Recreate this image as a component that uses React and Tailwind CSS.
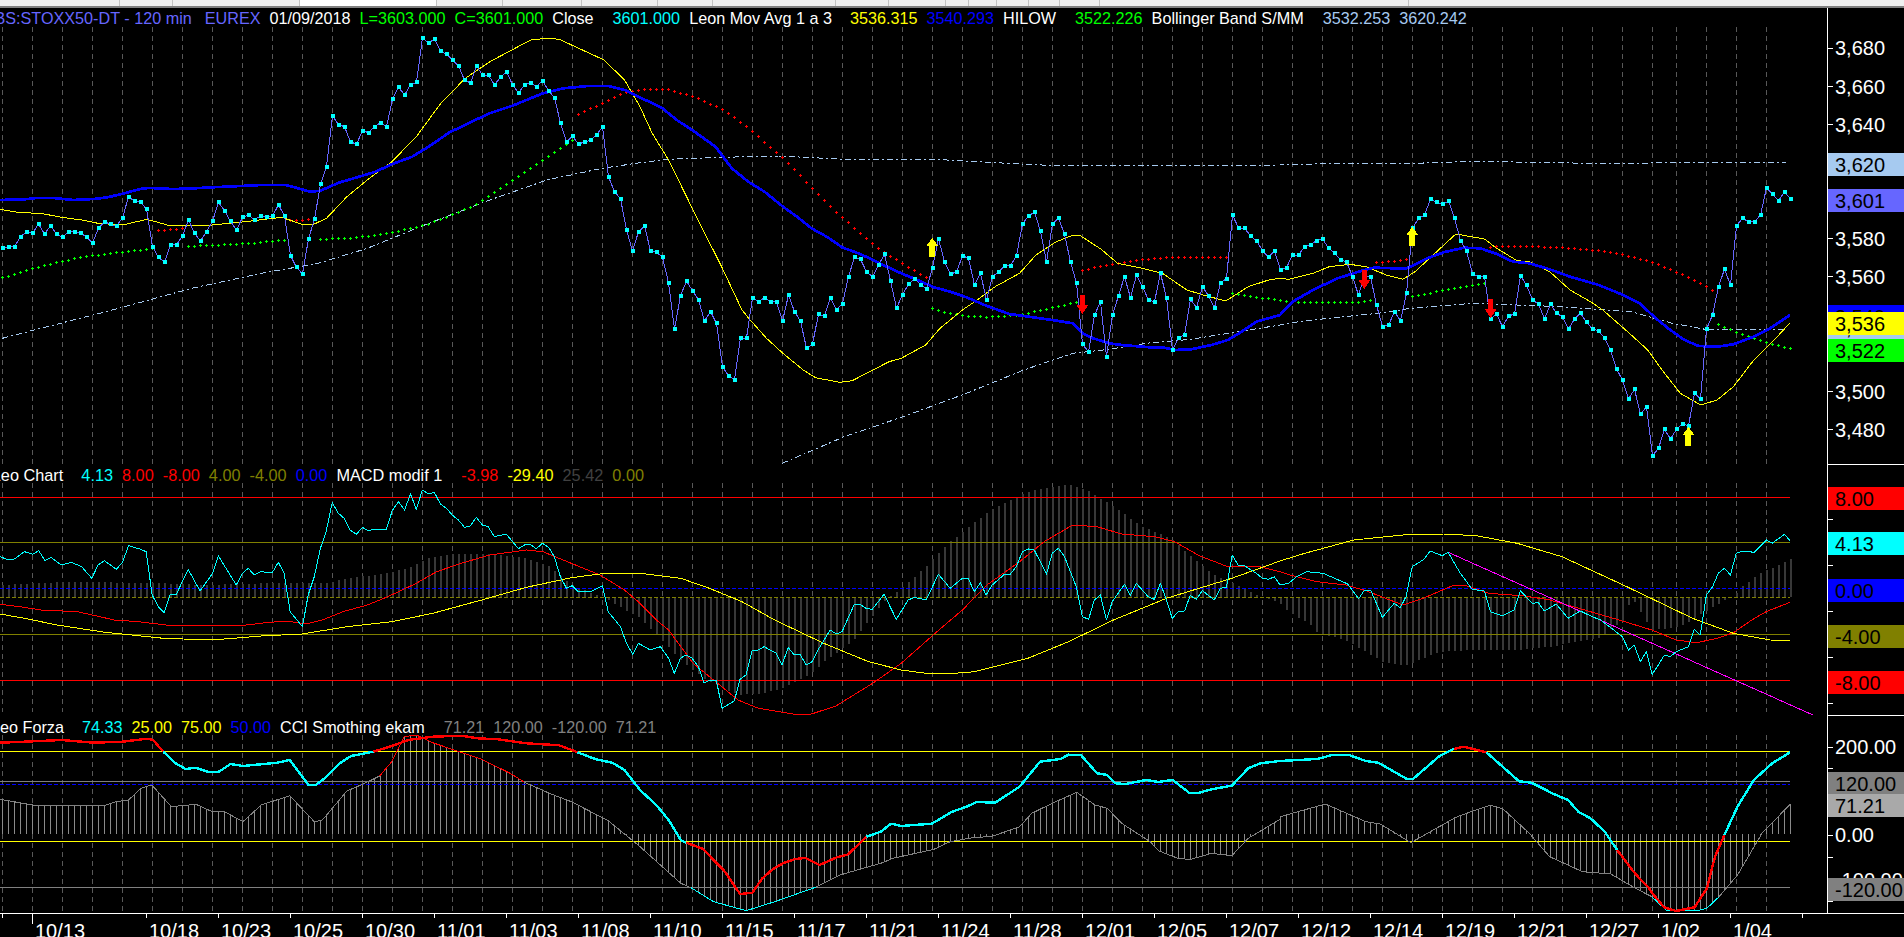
const CYAN = "#00ffff", BLUE = "#0000ff", YEL = "#ffff00", RED = "#ff0000", GRN = "#00ff00", OLV = "#808000", LB = "#a6caf0", GRY = "#808080", PRC = "#6666ff", MAG = "#ff00ff";
const A = 0, B = 640, C = 1264;
function merge(yo, ...sections) {
  const out = [];
  let last = -1e9;
  for (const [xo, arr] of sections) {
    const p = [];
    for (let i = 0; i < arr.length; i += 2) p.push([xo + arr[i] / 2.45, yo + arr[i + 1] / 3]);
    p.sort((a, b) => a[0] - b[0]);
    for (const q of p) if (q[0] > last) { out.push(q); last = q[0]; }
  }
  return out;
}
const yAt = (pts, x) => {
  if (x <= pts[0][0]) return pts[0][1];
  for (let i = 1; i < pts.length; i++) if (x <= pts[i][0]) {
    const [a, b] = pts[i - 1], [c, d] = pts[i];
    return b + (d - b) * (x - a) / (c - a);
  }
  return pts[pts.length - 1][1];
};
const str = (pts) => pts.map((p) => p[0].toFixed(1) + "," + p[1].toFixed(1)).join(" ");
const barX = (i) => 2.5 + 6 * i;

const price = [745,740,740,710,695,700,672,702,677,702,712,695,695,700,710,729,684,665,673,678,654,590,604,607,627,740,772,787,734,734,707,660,700,723,695,664,607,632,664,690,652,645,659,648,652,648,614,648,767,802,822,716,658,552,500,347,374,380,426,432,392,398,380,368,380,298,261,285,254,247,113,129,117,152,163,180,197,240,249,197,226,226,254,232,215,254,279,254,248,260,242,272,293,369,426,409,432,426,421,405,380,530,575,596,689,753,695,
678,752,757,772,848,987,887,843,872,899,963,935,970,1100,1127,1140,1014,1014,893,905,893,905,905,963,885,935,963,1045,1032,943,948,893,929,911,830,772,778,815,830,795,763,842,924,884,852,836,854,867,803,716,786,822,816,767,775,855,820,900,830,816,798,797,767,672,647,637,694,786,672,654,703,786,848,1032,1056,945,905,1070,945,887,830,893,825,860,900,905,820,893,1050,1014,1004,898,923,860,887,923,848,836,645,684,684,708,722,752,772,752,
810,803,765,765,740,735,722,716,745,758,780,785,830,885,830,830,915,980,975,935,962,880,685,655,645,597,607,613,603,655,722,752,822,830,830,957,942,980,948,942,827,855,900,912,957,912,940,950,987,957,940,967,987,992,1014,1049,1107,1140,1197,1168,1242,1220,1367,1345,1288,1317,1288,1272,1277,1180,1197,987,945,860,808,855,677,655,665,665,645,563,582,603,575,597];
const pricePts = price.map((v, i) => [barX(i), v / 3]);

const blueMA = merge(0,
  [A,[0,600,60,598,90,594,130,594,180,600,240,596,270,590,310,578,350,565,370,564,420,567,460,566,520,562,590,558,640,555,700,555,730,565,760,575,785,572,830,548,880,530,920,515,960,493,1010,470,1050,440,1100,398,1150,368,1200,340,1260,315,1330,280,1380,265,1440,258,1490,258,1530,270,1568,292]],
  [B,[55,325,90,360,130,392,185,440,225,505,265,545,305,575,350,620,385,650,420,685,460,712,495,742,540,762,590,792,640,820,680,840,720,862,760,875,800,892,850,918,905,942,940,948,1010,960,1060,970,1085,1000,1110,1015,1150,1030,1180,1035,1250,1042,1280,1042,1310,1050,1350,1048,1400,1035,1440,1020,1470,998,1510,965,1568,945]],
  [C,[70,905,120,870,180,835,240,812,270,803,320,805,350,805,400,775,440,757,490,743,530,745,570,762,610,785,650,790,700,808,750,830,820,855,880,885,920,910,960,955,990,985,1030,1020,1065,1038,1110,1040,1150,1033,1200,1010,1240,985,1289,945]]);

const yellowMA = merge(0,
  [A,[0,628,50,638,100,640,150,652,200,660,240,670,300,675,360,658,410,675,520,675,600,665,690,652,745,675,770,672,800,655,850,590,900,540,960,485,1020,410,1080,310,1140,235,1200,185,1300,120,1340,115,1370,118,1480,180,1530,240,1568,320]],
  [B,[30,400,70,480,130,630,200,800,250,930,270,960,310,1015,350,1060,400,1110,430,1133,490,1147,520,1142,610,1085,640,1075,700,1035,735,985,790,930,820,905,870,860,930,820,970,765,1020,725,1060,706,1080,708,1130,748,1170,790,1230,805,1280,820,1340,870,1380,885,1435,903,1490,860,1540,840,1568,835]],
  [C,[60,838,120,820,160,800,210,793,250,800,300,825,340,838,370,815,410,770,470,702,540,717,570,745,620,782,650,785,700,815,750,870,800,905,830,930,900,1005,940,1050,975,1110,1020,1180,1070,1215,1110,1200,1150,1160,1200,1080,1250,1020,1289,968]]);

const bollUp = merge(0,
  [A,[6,1015,100,985,260,935,470,865,640,820,780,790,900,745,1040,675,1200,600,1340,540,1476,505,1568,488]],
  [B,[70,478,200,472,340,468,500,478,720,478,900,490,1000,496,1300,498,1568,495]],
  [C,[180,490,370,490,510,484,800,490,1280,487]]);
const bollLow = merge(0,
  [B,[349,1390,500,1310,650,1248,800,1180,940,1110,1060,1060,1150,1048,1240,1030,1350,1018,1568,975]],
  [C,[100,962,280,940,360,925,510,910,730,920,900,935,1000,970,1090,990,1280,988]]);

const dotGroups = [
  [GRN, merge(0,[A,[6,832,100,798,200,770,300,755,373,745]])],
  [GRN, merge(0,[A,[461,738,600,730,696,720]])],
  [GRN, merge(0,[A,[785,716,860,714,960,697,1040,675,1100,648,1167,612,1240,553,1300,505,1360,455,1402,420]])],
  [GRN, merge(0,[B,[716,925,760,940,800,947,850,950,890,948,940,942,1000,925,1070,905]])],
  [GRN, merge(0,[B,[1451,880,1510,890,1568,900]],[C,[70,905,100,907,240,905,265,900]])],
  [GRN, merge(0,[C,[363,888,420,875,480,862,540,850]])],
  [GRN, merge(0,[C,[1113,973,1157,995,1230,1027,1289,1045]])],
  [RED, merge(0,[A,[388,690,447,685]])],
  [RED, merge(0,[A,[711,660,770,658]])],
  [RED, merge(0,[A,[1417,343,1476,308,1535,275,1568,268]],[B,[70,268,128,287,202,327,260,377,305,425,349,470,408,545,481,635,555,715,600,758,700,830]])],
  [RED, merge(0,[B,[1084,810,1143,795,1216,780,1300,770,1440,770]])],
  [RED, merge(0,[C,[275,787,350,778]])],
  [RED, merge(0,[C,[555,740,640,737,750,743,850,755,950,785,1040,830,1100,870]])],
];
const dotPath = (pts) => {
  let d = "";
  for (let i = 0; i < 299; i++) {
    const x = barX(i);
    if (x < pts[0][0] - 1 || x > pts[pts.length - 1][0] + 1) continue;
    const y = Math.round(yAt(pts, x)) + 0.5;
    d += `M${x - 1.5} ${y}h3M${x} ${y - 1.5}v3`;
  }
  return d;
};
const arrows = [
  [YEL, 640 + 716 / 2.45, 238, 1],
  [YEL, 1264 + 363 / 2.45, 227, 1],
  [YEL, 1264 + 1040 / 2.45, 427, 1],
  [RED, 640 + 1084 / 2.45, 295, -1],
  [RED, 1264 + 246 / 2.45, 270, -1],
  [RED, 1264 + 555 / 2.45, 299, -1],
];

const macdEnv = merge(310,
  [A,[0,825,170,815,250,815,300,820,400,820,500,825,700,818,800,820,850,805,950,790,1010,770,1050,745,1100,733,1200,733,1290,745,1340,765,1400,825,1476,862,1490,870,1568,925]],
  [B,[100,1050,160,1110,240,1155,300,1150,350,1135,420,1090,450,1055,520,995,555,940,600,870,625,850,655,820,700,770,750,705,800,655,860,600,950,545,1050,522,1100,545,1160,590,1230,650,1300,685,1350,740,1400,790,1470,830,1510,855,1540,868,1568,880]],
  [C,[60,905,120,950,130,970,200,990,290,1055,345,1068,430,1025,520,1020,620,1020,700,1010,820,985,880,930,900,862,950,960,1020,950,1060,920,1100,890,1130,870,1150,862,1170,830,1215,790,1260,765,1289,747]]);
const macdCyan = merge(310,
  [A,[0,740,15,747,35,747,60,725,80,733,95,722,110,752,125,742,150,765,175,757,200,770,225,805,240,765,256,752,285,778,300,757,315,707,345,718,358,725,373,855,388,890,402,908,417,853,432,853,461,778,490,843,520,792,535,738,579,825,594,790,608,775,623,795,638,785,667,788,682,757,696,790,711,905,741,950,755,855,770,800,785,715,799,665,814,578,829,610,843,625,858,660,873,673,888,652,902,662,917,657,947,657,961,602,976,575,991,600,1006,552,1020,598,1035,540,1050,552,1064,547,1079,582,1094,595,1108,615,1123,630,1138,652,1152,648,1167,622,1182,645,1196,650,1211,680,1240,672,1270,716,1285,705,1299,703,1314,716,1329,700,1344,712,1358,740,1373,800,1388,835,1402,827,1417,845,1447,845,1476,827,1490,905,1520,950,1535,1000,1550,1033,1564,1000]],
  [B,[25,1020,50,1010,70,1045,84,1090,99,1045,113,1035,128,1045,143,1070,157,1118,172,1110,187,1110,201,1195,231,1173,245,1108,260,1095,275,1022,290,1020,304,1010,334,1030,348,1065,363,1013,378,1035,392,1033,407,1065,422,1055,436,1020,466,960,481,972,495,965,525,883,539,883,554,895,569,898,598,853,628,928,657,870,672,862,701,870,731,793,760,835,790,805,804,805,819,845,834,818,848,855,863,825,893,793,907,793,922,770,937,725,952,717,966,720,996,793,1010,730,1025,715,1040,740,1069,830,1084,920,1099,928,1113,870,1128,855,1143,930,1157,875,1187,823,1201,857,1216,820,1245,860,1260,868,1275,820,1290,870,1304,925,1319,905,1334,903,1348,857,1363,868,1378,842,1407,870,1422,835,1437,832,1451,735,1466,767,1481,767,1510,790,1525,805,1540,808,1554,800,1568,825]],
  [C,[60,820,80,800,105,785,145,790,205,822,232,866,245,842,262,842,290,922,319,880,334,893,348,860,363,770,392,748,407,723,437,737,451,727,481,790,510,838,540,843,555,905,584,918,613,900,628,842,657,880,672,878,687,903,716,882,745,925,775,903,804,920,825,930,878,980,893,1020,907,1005,922,1055,937,1025,951,1093,966,1065,981,1035,995,1040,1010,1025,1040,1010,1054,958,1069,975,1084,855,1099,830,1113,790,1128,775,1143,795,1157,730,1172,723,1201,727,1231,690,1245,700,1275,673,1289,692]]);
const macdRed = merge(310,
  [A,[0,883,50,890,100,900,190,905,280,930,340,935,420,947,590,947,650,938,700,933,750,942,790,930,840,905,900,885,950,860,1020,820,1070,785,1130,760,1200,735,1290,720,1330,725,1360,740,1470,795,1530,840,1568,880]],
  [B,[40,930,70,960,130,1060,190,1120,240,1170,290,1195,380,1213,420,1212,480,1188,570,1120,640,1060,720,973,790,900,850,825,930,755,990,695,1060,645,1120,650,1180,672,1260,680,1310,695,1370,737,1440,770,1510,768,1568,785]],
  [C,[70,797,130,815,200,825,250,842,340,885,390,865,460,828,490,825,550,850,640,858,700,870,800,905,870,930,950,960,1010,990,1060,998,1110,985,1150,968,1195,930,1230,905,1289,877]]);
const macdYel = merge(310,
  [A,[0,912,60,925,140,945,220,960,265,968,300,972,400,985,520,990,640,978,740,972,850,950,960,935,1060,910,1180,870,1290,832,1400,803,1470,792,1568,790]],
  [B,[100,805,170,835,250,875,330,930,450,1000,560,1055,640,1080,700,1090,770,1090,820,1085,950,1045,1050,995,1160,930,1290,865,1450,805,1568,753]],
  [C,[100,730,220,690,340,675,440,672,520,677,620,700,730,740,880,825,1050,925,1150,970,1240,990,1289,992]]);
const magenta = merge(310, [C,[451,727,1345,1215]]);

const forza = [
  [RED, merge(620,[A,[0,368,60,365,150,360,230,368,300,365,360,356,375,360,400,395]])],
  [CYAN, merge(620,[A,[400,395,430,430,455,447,480,443,510,456,535,456,565,432,595,438,680,428,710,420,755,494,775,494,800,470,830,432,860,408,915,395]])],
  [RED, merge(620,[A,[915,395,960,378,1000,360,1060,350,1130,347,1170,355,1220,358,1290,370,1370,376,1415,397]])],
  [CYAN, merge(620,[A,[1415,397,1460,418,1500,428,1530,450,1568,510]],[B,[40,555,70,600,100,660,113,668]])],
  [RED, merge(620,[B,[113,668,155,687,180,720,205,750,245,822,275,818,300,775,325,748,350,730,380,717,405,714,440,735,480,713,510,703,555,650]])],
  [CYAN, merge(620,[B,[555,650,590,635,615,611,640,618,715,611,765,575,800,560,825,546,870,548,930,500,980,425,1030,417,1050,404,1080,405,1120,460,1145,465,1165,490,1190,492,1240,480,1270,486,1305,480,1345,518,1370,518,1400,508,1450,497,1490,445,1520,430,1568,423]],[C,[130,417,170,404,210,406,250,423,280,428,350,477,365,477,430,408,465,387]])],
  [RED, merge(620,[C,[465,387,490,380,545,397]])],
  [CYAN, merge(620,[C,[545,397,625,484,655,488,710,522,745,540,770,575,800,595,835,635,865,690]])],
  [RED, merge(620,[C,[865,690,910,762,940,800,955,825,980,862,1010,873,1055,862,1085,805,1105,710,1128,645]])],
  [CYAN, merge(620,[C,[1128,645,1160,560,1200,480,1245,430,1289,397]])],
];
const cci = [
  [GRY, merge(620,[A,[0,538,80,555,260,555,285,545,315,540,345,505,372,495,420,560,480,553,520,575,550,575,595,605,640,555,710,527,770,605,790,600,850,513,890,492,930,468]])],
  [RED, merge(620,[A,[930,468,960,425,990,350,1020,345,1060,368,1180,418,1250,460,1285,487]])],
  [GRY, merge(620,[A,[1285,487,1350,522,1400,545,1490,602,1568,680]],[B,[50,735,100,790,125,803]])],
  [CYAN, merge(620,[B,[125,803,180,845,260,872,330,845,430,802]])],
  [GRY, merge(620,[B,[430,802,490,765,590,730,620,715,720,688,760,665,820,652,860,650,930,620,960,580,1010,550,1070,517,1115,555,1145,565,1180,610,1250,665,1270,692,1320,716,1350,718,1400,700,1450,707,1490,655,1568,598]],[C,[40,590,150,552,250,605,285,612,360,668,470,592,510,574,555,556,585,566,650,640,700,710,780,755,850,762,910,805,950,830]])],
  [CYAN, merge(620,[C,[950,830,985,870,1060,873,1085,865,1115,830]])],
  [GRY, merge(620,[C,[1115,830,1160,765,1220,640,1289,553]])],
];
const cciAll = cci.flatMap((c) => c[1]);

const gridX = [];
for (let k = 0; k <= 55; k++) gridX.push(2.5 + 30 * k);
for (let j = 0; j < 4; j++) gridX.push(1676.5 + 30 * j);
const bars = Array.from({ length: 299 }, (_, i) => barX(i));

function Plot({ top, height, gridTop, gridBottom, children }) {
  return (
    <svg className="block shrink-0" width="1827" height={height} viewBox={`0 ${top} 1827 ${height}`} shapeRendering="crispEdges" fill="none">
      {gridX.map((x) => (
        <line key={x} x1={x} x2={x} y1={gridTop} y2={gridBottom} stroke="#585858" strokeDasharray="5 4" />
      ))}
      {children}
    </svg>
  );
}
const HLine = ({ y, c, dash, w = 1 }) => <line x1="0" x2="1790" y1={y} y2={y} stroke={c} strokeDasharray={dash} strokeWidth={w} />;
const Line = ({ pts, c, w = 1, dash }) => <polyline points={str(pts)} stroke={c} strokeWidth={w} strokeLinejoin="round" strokeDasharray={dash} />;

function Axis({ top, items, ticks, bottomBorder }) {
  return (
    <div className={`relative h-full w-[77px] shrink-0 overflow-hidden border-l border-white ${bottomBorder ? "border-b" : ""}`}>
      {ticks.map((y) => (
        <div key={y} className="absolute left-0 h-px w-[5px] bg-white" style={{ top: y - top }} />
      ))}
      {items.map((it) =>
        it.bg ? (
          <div key={it.t} className="absolute left-0 flex h-[23px] w-full items-center pl-[7px] text-[20px] leading-none text-black" style={{ top: it.y - top, backgroundColor: it.bg }}>
            {it.t}
          </div>
        ) : (
          <div key={it.t} className="absolute left-0 pl-[7px] text-[20px] leading-none text-white" style={{ top: it.y - top - 10 }}>
            {it.t}
          </div>
        )
      )}
    </div>
  );
}

const priceAxis = [
  { t: "3,680", y: 48 }, { t: "3,660", y: 86.5 }, { t: "3,640", y: 124.5 }, { t: "3,580", y: 238.5 }, { t: "3,560", y: 276.5 }, { t: "3,500", y: 391.5 }, { t: "3,480", y: 429.5 },
  { t: "3,620", y: 153, bg: LB }, { t: "3,601", y: 189, bg: PRC }, { t: "3,540", y: 305, bg: BLUE }, { t: "3,532", y: 316, bg: LB }, { t: "3,536", y: 312, bg: YEL }, { t: "3,522", y: 339, bg: GRN },
];
const macdAxis = [
  { t: "8.00", y: 487, bg: RED }, { t: "4.13", y: 532, bg: CYAN }, { t: "0.00", y: 579, bg: BLUE }, { t: "-4.00", y: 625, bg: OLV }, { t: "-8.00", y: 671, bg: RED },
];
const cciAxis = [
  { t: "200.00", y: 747 }, { t: "0.00", y: 835 }, { t: "-100.00", y: 880 },
  { t: "120.00", y: 772, bg: GRY }, { t: "71.21", y: 794, bg: "#a9a9a9" }, { t: "-120.00", y: 878, bg: GRY },
];
const dates = ["10/18","10/23","10/25","10/30","11/01","11/03","11/08","11/10","11/15","11/17","11/21","11/24","11/28","12/01","12/05","12/07","12/12","12/14","12/19","12/21","12/27","1/02","1/04"];
const tickXs = Array.from({ length: 24 }, (_, i) => 146 + 72 * i);
const topMarks = [120, 173, 300, 437, 503, 582, 658, 713, 836, 889, 946, 969, 997, 1029, 1060, 1100, 1409];

export default function App() {
  return (
    <div className="flex h-[937px] w-[1904px] flex-col overflow-hidden bg-black font-['Liberation_Sans',Arial,sans-serif]">
      <div className="flex h-[8px] shrink-0 border-b-2 border-[#808080] bg-[#f0f0f0]">
        {topMarks.map((x, i) => (
          <div key={x} className={`shrink-0 border-r border-[#c4c4c4] ${x === 437 ? "bg-white" : ""}`} style={{ width: x - (i ? topMarks[i - 1] : 0) }} />
        ))}
      </div>

      <div className="relative flex h-[457px] shrink-0">
        <Plot top={8} height={457} gridTop={27} gridBottom={464}>
          <Line pts={bollUp} c={LB} dash="6 3 2 3" />
          <Line pts={bollLow} c={LB} dash="6 3 2 3" />
          {dotGroups.map(([c, pts], i) => (
            <path key={i} d={dotPath(pts)} stroke={c} />
          ))}
          <Line pts={yellowMA} c={YEL} />
          <Line pts={blueMA} c={BLUE} w={2.7} />
          <Line pts={pricePts} c={PRC} />
          {pricePts.map(([x, y]) => (
            <rect key={x} x={x - 2} y={y - 2} width="4" height="4" fill={CYAN} />
          ))}
          {arrows.map(([c, x, y, dir]) => (
            <polygon
              key={x}
              fill={c}
              points={dir > 0
                ? `${x},${y} ${x + 6},${y + 8} ${x + 3},${y + 8} ${x + 3},${y + 19} ${x - 3},${y + 19} ${x - 3},${y + 8} ${x - 6},${y + 8}`
                : `${x},${y + 19} ${x + 6},${y + 10} ${x + 2.5},${y + 10} ${x + 2.5},${y} ${x - 2.5},${y} ${x - 2.5},${y + 10} ${x - 6},${y + 10}`}
            />
          ))}
        </Plot>
        <Axis top={8} items={priceAxis} ticks={[48, 86, 124, 238, 276, 391, 429]} bottomBorder />
        <div className="absolute left-0 top-[2px] flex gap-[9px] whitespace-nowrap text-[16.2px] leading-4 text-white">
          <span className="ml-[-5.6px] text-[#6666ff]">BS:STOXX50-DT - 120 min</span>
          <span className="ml-[4px] text-[#6666ff]">EUREX</span>
          <span>01/09/2018</span>
          <span className="text-[#00ff00]">L=3603.000</span>
          <span className="text-[#00ff00]">C=3601.000</span>
          <span>Close</span>
          <span className="ml-[10px] text-[#00ffff]">3601.000</span>
          <span>Leon Mov Avg 1 a 3</span>
          <span className="ml-[9px] text-[#ffff00]">3536.315</span>
          <span className="text-[#0000ff]">3540.293</span>
          <span>HILOW</span>
          <span className="ml-[10px] text-[#00ff00]">3522.226</span>
          <span>Bollinger Band S/MM</span>
          <span className="ml-[10px] text-[#a6caf0]">3532.253</span>
          <span className="text-[#a6caf0]">3620.242</span>
        </div>
      </div>

      <div className="relative flex h-[251px] shrink-0">
        <Plot top={465} height={251} gridTop={483} gridBottom={712}>
          {bars.map((x) => (
            <line key={x} x1={x} x2={x} y1={597} y2={yAt(macdEnv, x)} stroke="#383838" strokeWidth="2" />
          ))}
          <HLine y={497} c={RED} />
          <HLine y={542.5} c={OLV} />
          <HLine y={588.5} c={BLUE} dash="4 2" />
          <HLine y={597.5} c={OLV} dash="4 2" />
          <HLine y={634.5} c={OLV} />
          <HLine y={680.5} c={RED} />
          <Line pts={macdRed} c={RED} />
          <Line pts={magenta} c={MAG} />
          <Line pts={macdYel} c={YEL} />
          <Line pts={macdCyan} c={CYAN} />
        </Plot>
        <Axis top={465} items={macdAxis} ticks={[519, 565, 611, 657, 703]} bottomBorder />
        <div className="absolute left-0 top-[2px] flex gap-[9px] whitespace-nowrap text-[16.3px] leading-4 text-white">
          <span className="ml-[-8.2px]">Leo Chart</span>
          <span className="ml-[9px] text-[#00ffff]">4.13</span>
          <span className="text-[#ff0000]">8.00</span>
          <span className="text-[#ff0000]">-8.00</span>
          <span className="text-[#808000]">4.00</span>
          <span className="text-[#808000]">-4.00</span>
          <span className="text-[#0000ff]">0.00</span>
          <span>MACD modif 1</span>
          <span className="ml-[10px] text-[#ff0000]">-3.98</span>
          <span className="text-[#ffff00]">-29.40</span>
          <span className="text-[#404040]">25.42</span>
          <span className="text-[#808000]">0.00</span>
        </div>
      </div>

      <div className="relative flex h-[197px] shrink-0">
        <Plot top={716} height={197} gridTop={735} gridBottom={912}>
          {bars.map((x) => (
            <line key={x} x1={x} x2={x} y1={834} y2={yAt(cciAll, x)} stroke="#8a8a8a" />
          ))}
          <HLine y={751.5} c={YEL} />
          <HLine y={781.5} c={GRY} />
          <HLine y={784.5} c={BLUE} dash="4 2" />
          <HLine y={841.5} c={YEL} />
          <HLine y={887.5} c={GRY} />
          {cci.map(([c, pts], i) => (
            <Line key={i} pts={pts} c={c} />
          ))}
          {forza.map(([c, pts], i) => (
            <Line key={i} pts={pts} c={c} w={2.4} />
          ))}
        </Plot>
        <Axis top={716} items={cciAxis} ticks={[747, 768, 835, 857, 901]} />
        <div className="absolute left-0 top-[3px] flex gap-[9px] whitespace-nowrap text-[16.2px] leading-4 text-white">
          <span className="ml-[-9px]">Leo Forza</span>
          <span className="ml-[9px] text-[#00ffff]">74.33</span>
          <span className="text-[#ffff00]">25.00</span>
          <span className="text-[#ffff00]">75.00</span>
          <span className="text-[#0000ff]">50.00</span>
          <span>CCI Smothing ekam</span>
          <span className="ml-[10px] text-[#808080]">71.21</span>
          <span className="text-[#808080]">120.00</span>
          <span className="text-[#808080]">-120.00</span>
          <span className="text-[#808080]">71.21</span>
        </div>
      </div>

      <div className="relative h-[24px] shrink-0 overflow-hidden border-t border-white">
        <div className="absolute left-[2px] top-0 h-[4px] w-px bg-white" />
        <div className="absolute left-[32px] top-0 h-[10px] w-px bg-white" />
        <span className="absolute left-[35px] top-[7px] text-[20px] leading-none text-white">10/13</span>
        {tickXs.map((x) => (
          <div key={x} className="absolute top-0 h-[4px] w-px bg-white" style={{ left: x }} />
        ))}
        {dates.map((d, i) => (
          <span key={d} className="absolute top-[7px] text-[20px] leading-none text-white" style={{ left: tickXs[i] + 3 }}>
            {d}
          </span>
        ))}
      </div>
    </div>
  );
}
